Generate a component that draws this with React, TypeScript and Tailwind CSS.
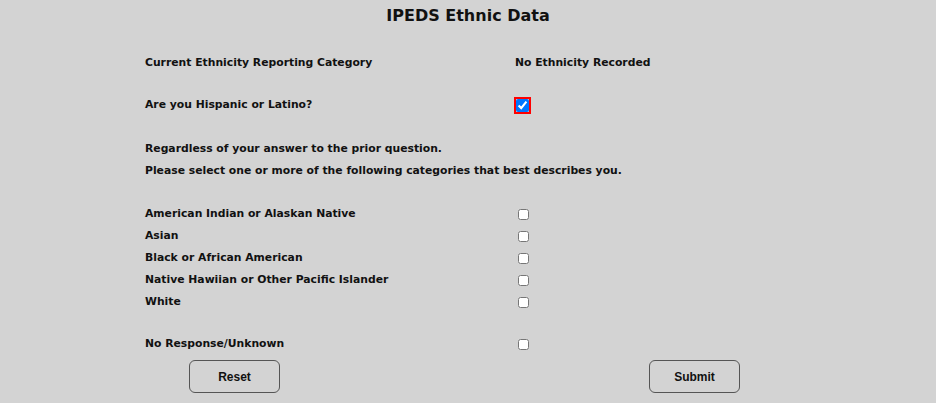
import React from 'react'

const races = [
  'American Indian or Alaskan Native',
  'Asian',
  'Black or African American',
  'Native Hawiian or Other Pacific Islander',
  'White',
]

const Row = ({ label, children, className = '' }: { label: string; children?: React.ReactNode; className?: string }) => (
  <div className={`h-[22px] flex flex-row items-center ${className}`}>
    <div className="w-[370px] shrink-0">{label}</div>
    <div className="flex-1 flex items-center">{children}</div>
  </div>
)

const Box = () => <input type="checkbox" className="w-[11px] h-[11px] ml-[3px] m-0" />

export default function App() {
  return (
    <div className="w-full min-h-[403px] bg-[#d3d3d3] text-[#111] font-['DejaVu_Sans',sans-serif] font-bold text-[10.8px]">
      <div className="h-[31px] flex items-center justify-center text-[16px]">IPEDS Ethnic Data</div>
      <div className="w-[646px] mx-auto flex flex-col">
        <Row label="Current Ethnicity Reporting Category" className="mt-[21px]">
          No Ethnicity Recorded
        </Row>
        <Row label="Are you Hispanic or Latino?" className="mt-[20px]">
          <input type="checkbox" defaultChecked className="w-[13px] h-[13px] m-0 ml-[1px] outline-2 outline-[#ff0000] accent-[#0075ff]" />
        </Row>
        <div className="mt-[22px] h-[22px] flex items-center">Regardless of your answer to the prior question.</div>
        <div className="h-[22px] flex items-center">Please select one or more of the following categories that best describes you.</div>
        <div className="mt-[21px] flex flex-col">
          {races.map((r) => (
            <Row key={r} label={r}>
              <Box />
            </Row>
          ))}
        </div>
        <Row label="No Response/Unknown" className="mt-[20px]">
          <Box />
        </Row>
      </div>
      <div className="flex flex-row mt-[5px] pl-[189px] font-['Liberation_Sans',sans-serif] text-[12px]">
        <button className="w-[91px] h-[33px] rounded-[6px] border border-[#555] bg-transparent">Reset</button>
        <button className="w-[91px] h-[33px] rounded-[6px] border border-[#555] bg-transparent ml-[369px]">Submit</button>
      </div>
    </div>
  )
}
